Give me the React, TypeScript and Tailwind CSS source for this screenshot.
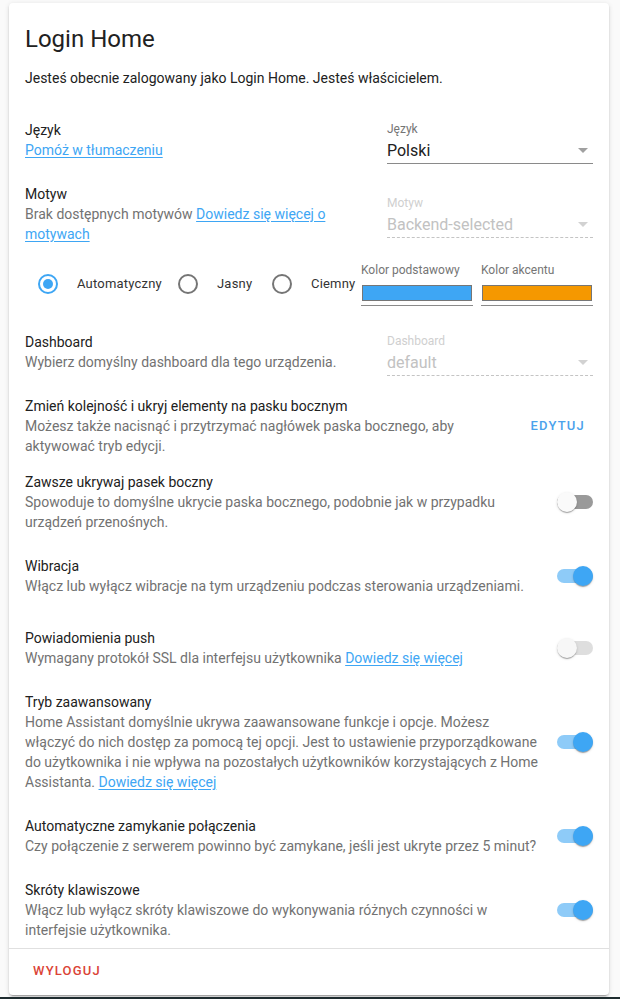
import type { ReactNode } from "react";

const BLUE = "#3ea6f4";

function Link({ children }: { children: ReactNode }) {
  return <span className="text-[#3ea6f4] underline underline-offset-2">{children}</span>;
}

function Row({ title, desc, children }: { title: string; desc: ReactNode; children?: ReactNode }) {
  return (
    <div className="flex min-h-[72px] items-center gap-4 px-4 py-2">
      <div className="min-w-0 flex-1">
        <div className="text-sm leading-5 text-[#212121]">{title}</div>
        <div className="text-sm leading-5 text-[#727272]">{desc}</div>
      </div>
      {children}
    </div>
  );
}

function Select({ label, value, disabled }: { label: string; value: string; disabled?: boolean }) {
  return (
    <div
      className={`relative w-[206px] shrink-0 pt-[5px] ${
        disabled ? "border-b border-dashed border-[#c4c4c4]" : "border-b border-[#8a8a8a]"
      }`}
    >
      <div className={`text-xs leading-4 ${disabled ? "text-[#cfcfcf]" : "text-[#757575]"}`}>{label}</div>
      <div className={`mt-[2px] text-base leading-6 ${disabled ? "text-[#c2c2c2]" : "text-[#212121]"}`}>{value}</div>
      <svg className="absolute right-[5px] bottom-[10px]" width="10" height="5" viewBox="0 0 10 5">
        <path d="M0 0 L10 0 L5 5 Z" fill={disabled ? "#d2d2d2" : "#a0a0a0"} />
      </svg>
    </div>
  );
}

function Toggle({ on, disabled }: { on?: boolean; disabled?: boolean }) {
  const track = on ? "bg-[#8ecbf8]" : disabled ? "bg-[#dedede]" : "bg-[#9a9a9a]";
  const thumb = on ? "right-0 bg-[#3ea6f4]" : disabled ? "left-0 bg-[#f7f7f7]" : "left-0 bg-[#fafafa]";
  return (
    <div className="relative flex h-5 w-9 shrink-0 items-center">
      <div className={`h-[14px] w-9 rounded-full ${track}`} />
      <div
        className={`absolute top-0 h-5 w-5 rounded-full shadow-[0_2px_1px_-1px_rgba(0,0,0,0.2),0_1px_1px_0_rgba(0,0,0,0.14),0_1px_3px_0_rgba(0,0,0,0.12)] ${thumb}`}
      />
    </div>
  );
}

function Radio({ checked, label, width }: { checked?: boolean; label: string; width: string }) {
  return (
    <div className="flex items-center">
      <span className="flex h-10 w-10 items-center justify-center">
        <span
          className={`flex h-5 w-5 items-center justify-center rounded-full border-2 ${
            checked ? "border-[#3ea6f4]" : "border-[#757575]"
          }`}
        >
          {checked && <span className="h-2.5 w-2.5 rounded-full bg-[#3ea6f4]" />}
        </span>
      </span>
      <span className={`ml-[9px] text-[13px] tracking-[0.2px] text-[#333] ${width}`}>{label}</span>
    </div>
  );
}

function ColorPicker({ label, color }: { label: string; color: string }) {
  return (
    <div className="w-[112px] border-b border-[#8a8a8a] pb-[4px]">
      <div className="text-xs leading-4 text-[#757575]">{label}</div>
      <div className="mx-[1px] mt-[7px] h-[16px] border border-[#767676]" style={{ backgroundColor: color }} />
    </div>
  );
}

export default function App() {
  return (
    <div className="flex h-[999px] flex-col bg-[#fafafa] font-['Roboto',sans-serif]">
      <div className="mt-[3px] ml-[9px] w-[600px] rounded bg-white shadow-[0_2px_2px_0_rgba(0,0,0,0.14),0_1px_5px_0_rgba(0,0,0,0.12),0_3px_1px_-2px_rgba(0,0,0,0.2)]">
        <div className="px-4 pt-[20px] text-2xl leading-8 text-[#212121]">Login Home</div>
        <p className="mt-[13px] px-4 text-sm leading-5 text-[#212121]">
          Jesteś obecnie zalogowany jako Login Home. Jesteś właścicielem.
        </p>

        <div className="mt-4">
          <Row title="Język" desc={<Link>Pomóż w tłumaczeniu</Link>}>
            <Select label="Język" value="Polski" />
          </Row>
          <Row
            title="Motyw"
            desc={
              <>
                Brak dostępnych motywów <Link>Dowiedz się więcej o motywach</Link>
              </>
            }
          >
            <Select label="Motyw" value="Backend-selected" disabled />
          </Row>

          <div className="flex h-16 items-center px-4">
            <div className="flex items-center pl-[3px]">
              <Radio checked label="Automatyczny" width="w-[91px]" />
              <Radio label="Jasny" width="w-[45px]" />
              <Radio label="Ciemny" width="" />
            </div>
            <div className="ml-auto flex gap-2">
              <ColorPicker label="Kolor podstawowy" color={BLUE} />
              <ColorPicker label="Kolor akcentu" color="#f59800" />
            </div>
          </div>

          <Row title="Dashboard" desc="Wybierz domyślny dashboard dla tego urządzenia.">
            <Select label="Dashboard" value="default" disabled />
          </Row>
          <Row
            title="Zmień kolejność i ukryj elementy na pasku bocznym"
            desc="Możesz także nacisnąć i przytrzymać nagłówek paska bocznego, aby aktywować tryb edycji."
          >
            <button
              type="button"
              className="h-9 shrink-0 px-2 text-[13px] font-medium tracking-[1.2px] text-[#4ba2ec]"
            >
              EDYTUJ
            </button>
          </Row>
          <Row
            title="Zawsze ukrywaj pasek boczny"
            desc="Spowoduje to domyślne ukrycie paska bocznego, podobnie jak w przypadku urządzeń przenośnych."
          >
            <Toggle />
          </Row>
          <Row
            title="Wibracja"
            desc="Włącz lub wyłącz wibracje na tym urządzeniu podczas sterowania urządzeniami."
          >
            <Toggle on />
          </Row>
          <Row
            title="Powiadomienia push"
            desc={
              <>
                Wymagany protokół SSL dla interfejsu użytkownika <Link>Dowiedz się więcej</Link>
              </>
            }
          >
            <Toggle disabled />
          </Row>
          <Row
            title="Tryb zaawansowany"
            desc={
              <>
                Home Assistant domyślnie ukrywa zaawansowane funkcje i opcje. Możesz włączyć do nich dostęp za
                pomocą tej opcji. Jest to ustawienie przyporządkowane do użytkownika i nie wpływa na pozostałych
                użytkowników korzystających z Home Assistanta. <Link>Dowiedz się więcej</Link>
              </>
            }
          >
            <Toggle on />
          </Row>
          <Row
            title="Automatyczne zamykanie połączenia"
            desc="Czy połączenie z serwerem powinno być zamykane, jeśli jest ukryte przez 5 minut?"
          >
            <Toggle on />
          </Row>
          <Row
            title="Skróty klawiszowe"
            desc="Włącz lub wyłącz skróty klawiszowe do wykonywania różnych czynności w interfejsie użytkownika."
          >
            <Toggle on />
          </Row>
        </div>

        <div className="border-t border-[#e0e0e0] px-4 pt-[4px] pb-[6px]">
          <button type="button" className="h-9 px-2 text-[13px] font-medium tracking-[1.2px] text-[#db4437]">
            WYLOGUJ
          </button>
        </div>
      </div>
      <div className="mt-auto h-[2px] bg-[#1e2c2f]" />
    </div>
  );
}
